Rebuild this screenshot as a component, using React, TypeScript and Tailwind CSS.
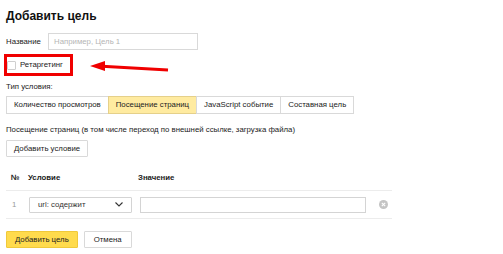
export default function App() {
  const tabs = [
    { label: "Количество просмотров", active: false },
    { label: "Посещение страниц", active: true },
    { label: "JavaScript событие", active: false },
    { label: "Составная цель", active: false },
  ];

  return (
    <div className="h-[254px] w-[503px] bg-white pl-[6px] pt-[7px] text-[7.8px] leading-[12px] text-black font-['Liberation_Sans',Arial,sans-serif]">
      {/* Title */}
      <h1 className="text-[12px] font-bold leading-[18px] text-[#111]">Добавить цель</h1>

      {/* Name */}
      <div className="mt-[8px] flex items-center">
        <span className="w-[42px] text-[#222]">Название</span>
        <div className="flex h-[17px] w-[150px] items-center border border-[#d9d9d9] px-[5px] text-[#b5b5b5]">
          Например, Цель 1
        </div>
      </div>

      {/* Retargeting (highlighted) */}
      <div className="mt-[4px] flex items-stretch">
        <div className="ml-[-2px] flex h-[22px] w-[69px] items-center border-[3px] border-[#f00000]">
          <span className="h-[9px] w-[9px] rounded-[1px] border border-[#cfcfcf] bg-white" />
          <span className="ml-[4px] text-[#222]">Ретаргетинг</span>
        </div>
        <svg width="80" height="22" viewBox="0 0 80 22" className="ml-[17px]">
          <polygon points="0,12 15,7 15,17" fill="#f00000" />
          <line x1="12" y1="12.2" x2="78" y2="16" stroke="#f00000" strokeWidth="3" />
        </svg>
      </div>

      {/* Condition type */}
      <div className="mt-[5px] text-[#222]">Тип условия:</div>
      <div className="mt-[3px] flex h-[18px]">
        {tabs.map((t, i) => (
          <div
            key={t.label}
            className={
              t.active
                ? "ml-[-1px] flex items-center border border-[#e5d08a] bg-[#ffeba0] px-[7px] text-[#222]"
                : i === 0
                ? "flex items-center border border-[#d9d9d9] px-[7px] text-[#222]"
                : "ml-[-1px] flex items-center border border-[#d9d9d9] px-[7px] text-[#222]"
            }
          >
            {t.label}
          </div>
        ))}
      </div>

      <div className="mt-[10px] text-[#222]">
        Посещение страниц (в том числе переход по внешней ссылке, загрузка файла)
      </div>

      <button className="mt-[4px] flex h-[17px] items-center rounded-[1px] border border-[#d9d9d9] bg-white px-[7px] text-[#222]">
        Добавить условие
      </button>

      {/* Conditions table */}
      <div className="mt-[8px] w-[386px]">
        <div className="grid h-[26px] grid-cols-[22px_110px_236px_18px] items-center border-b border-[#ececec] font-bold text-[#222]">
          <span className="pl-[5px]">№</span>
          <span>Условие</span>
          <span>Значение</span>
          <span />
        </div>
        <div className="grid h-[28px] grid-cols-[22px_110px_236px_18px] items-center border-b border-[#ececec]">
          <span className="pl-[6px] text-[#999]">1</span>
          <div className="ml-[1px] flex h-[16px] w-[103px] items-center justify-between rounded-[1px] border border-[#d4d4d4] pl-[8px] pr-[8px] text-[#333]">
            <span>url: содержит</span>
            <svg width="8" height="5" viewBox="0 0 8 5">
              <path d="M0.5 0.5 L4 4 L7.5 0.5" fill="none" stroke="#333" strokeWidth="1.1" />
            </svg>
          </div>
          <div className="ml-[2px] h-[16px] w-[226px] border border-[#d4d4d4]" />
          <span className="flex justify-center">
            <svg width="9" height="9" viewBox="0 0 9 9">
              <circle cx="4.5" cy="4.5" r="4.5" fill="#c4c4c4" />
              <path d="M2.8 2.8 L6.2 6.2 M6.2 2.8 L2.8 6.2" stroke="#fff" strokeWidth="1.1" />
            </svg>
          </span>
        </div>
      </div>

      {/* Actions */}
      <div className="mt-[12px] flex gap-[6px]">
        <button className="flex h-[17px] items-center rounded-[1px] border border-[#f0c93a] bg-[#ffdb4d] px-[8px] text-[#222]">
          Добавить цель
        </button>
        <button className="flex h-[17px] items-center rounded-[1px] border border-[#d9d9d9] bg-white px-[9px] text-[#222]">
          Отмена
        </button>
      </div>
    </div>
  );
}
